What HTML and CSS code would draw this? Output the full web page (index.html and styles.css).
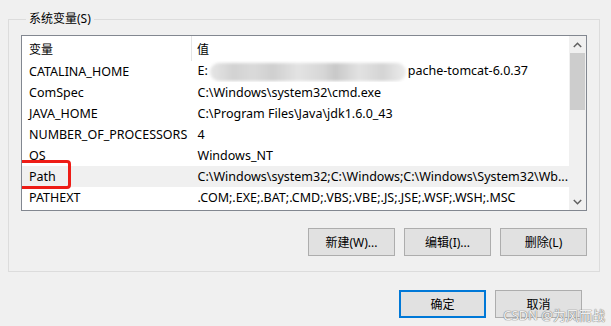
FILE: index.html
```html
<!DOCTYPE html>
<html lang="zh-CN">
<head>
  <meta charset="UTF-8">
  <title>系统变量</title>
  <link rel="stylesheet" href="styles.css">
</head>
<body>

  <div class="dialog">
    <fieldset class="group">
      <legend>系统变量(S)</legend>

      <div class="listbox">
        <div class="list-body">
          <table class="vars">
            <thead>
              <tr>
                <th class="col-name">变量</th>
                <th class="col-value">值</th>
              </tr>
            </thead>
            <tbody>
              <tr>
                <td>CATALINA_HOME</td>
                <td>E:<span class="blurred"></span>pache-tomcat-6.0.37</td>
              </tr>
              <tr>
                <td>ComSpec</td>
                <td>C:\Windows\system32\cmd.exe</td>
              </tr>
              <tr>
                <td>JAVA_HOME</td>
                <td>C:\Program Files\Java\jdk1.6.0_43</td>
              </tr>
              <tr>
                <td>NUMBER_OF_PROCESSORS</td>
                <td>4</td>
              </tr>
              <tr>
                <td>OS</td>
                <td>Windows_NT</td>
              </tr>
              <tr class="selected">
                <td class="name-cell"><span class="marked">Path</span></td>
                <td>C:\Windows\system32;C:\Windows;C:\Windows\System32\Wb...</td>
              </tr>
              <tr>
                <td>PATHEXT</td>
                <td>.COM;.EXE;.BAT;.CMD;.VBS;.VBE;.JS;.JSE;.WSF;.WSH;.MSC</td>
              </tr>
            </tbody>
          </table>
        </div>

        <!-- 滚动条 -->
        <div class="scrollbar">
          <div class="arrow">
            <svg width="9" height="6" viewBox="0 0 9 6"><path d="M0.8 5 L4.5 1.3 L8.2 5" fill="none" stroke="#606060" stroke-width="1.5"/></svg>
          </div>
          <div class="track">
            <div class="thumb"></div>
          </div>
          <div class="arrow">
            <svg width="9" height="6" viewBox="0 0 9 6"><path d="M0.8 1 L4.5 4.7 L8.2 1" fill="none" stroke="#606060" stroke-width="1.5"/></svg>
          </div>
        </div>
      </div>

      <div class="actions">
        <button class="btn">新建(W)...</button>
        <button class="btn">编辑(I)...</button>
        <button class="btn">删除(L)</button>
      </div>
    </fieldset>

    <div class="footer">
      <button class="btn default">确定</button>
      <button class="btn">取消</button>
    </div>

    <div class="watermark">CSDN @为风而战</div>
  </div>

</body>
</html>
```

FILE: styles.css
```css
body {
  margin: 0;
  background: #f0f0f0;
  font-family: 'Noto Sans', 'Noto Sans CJK SC', sans-serif;
  font-size: 12px;
  color: #000;
}

.dialog {
  position: relative;
  width: 611px;
  height: 326px;
  overflow: hidden;
}

.group {
  margin: 11px 0 0 8px;
  width: 592px;
  height: 261px;
  box-sizing: border-box;
  border: 1px solid #dcdcdc;
  padding: 8px 12px 0 12px;
}

.group legend {
  padding: 0 3px;
  margin-left: 5px;
  line-height: 16px;
  color: #000;
}

.listbox {
  display: flex;
  height: 176px;
  box-sizing: border-box;
  border: 1px solid #828790;
  background: #fff;
}

.list-body {
  flex: 1;
  overflow: hidden;
}

.vars {
  border-collapse: collapse;
  width: 100%;
  table-layout: fixed;
  font-size: 12.5px;
}

.vars th {
  font-weight: normal;
  text-align: left;
  height: 25px;
  padding: 0 0 0 7px;
  font-size: 12px;
}

.vars th.col-name {
  width: 162px;
  border-right: 1px solid #e5e5e5;
}

.vars th.col-value {
  padding-left: 5px;
}

.vars td {
  height: 21px;
  padding: 0 0 0 7px;
  white-space: nowrap;
  overflow: hidden;
}

.vars td + td {
  padding-left: 6px;
}

.vars td.name-cell {
  overflow: visible;
}

.vars tr.selected td {
  background: #f0f0f0;
}

.blurred {
  display: inline-block;
  vertical-align: middle;
  width: 196px;
  height: 18px;
  margin: 0 2px;
  border-radius: 9px;
  background: linear-gradient(90deg, #e6e6e6, #d2d2d2 12%, #dadada 22%, #cfcfcf 32%, #e3e3e3 45%, #d6d6d6 58%, #c8c8c8 64%, #e2e2e2 76%, #d4d4d4 88%, #ececec);
  filter: blur(1.5px);
}

.marked {
  position: relative;
}

.marked::after {
  content: '';
  position: absolute;
  left: -12px;
  top: -8px;
  width: 48px;
  height: 23px;
  border: 3px solid #ee1c16;
  border-radius: 4px;
}

.scrollbar {
  width: 17px;
  display: flex;
  flex-direction: column;
  background: #f0f0f0;
}

.arrow {
  height: 17px;
  display: flex;
  align-items: center;
  justify-content: center;
}

.track {
  flex: 1;
  padding: 0 1px;
}

.thumb {
  height: 57px;
  background: #cdcdcd;
}

.actions {
  display: flex;
  justify-content: flex-end;
  gap: 9px;
  margin-top: 17px;
}

.btn {
  width: 87px;
  height: 28px;
  box-sizing: border-box;
  border: 1px solid #adadad;
  background: #e1e1e1;
  font-family: 'Noto Sans', 'Noto Sans CJK SC', sans-serif;
  font-size: 12px;
  color: #000;
  padding: 0;
}

.btn.default {
  border: 2px solid #0078d7;
}

.footer {
  display: flex;
  justify-content: flex-end;
  gap: 9px;
  margin: 18px 29px 0 0;
}

.watermark {
  position: absolute;
  right: 6px;
  bottom: 2px;
  font-size: 13px;
  color: rgba(255, 255, 255, 0.9);
  text-shadow: 0 0 1px #808080, 0 0 1px #808080, 0 0 1px #a0a0a0;
}
```
